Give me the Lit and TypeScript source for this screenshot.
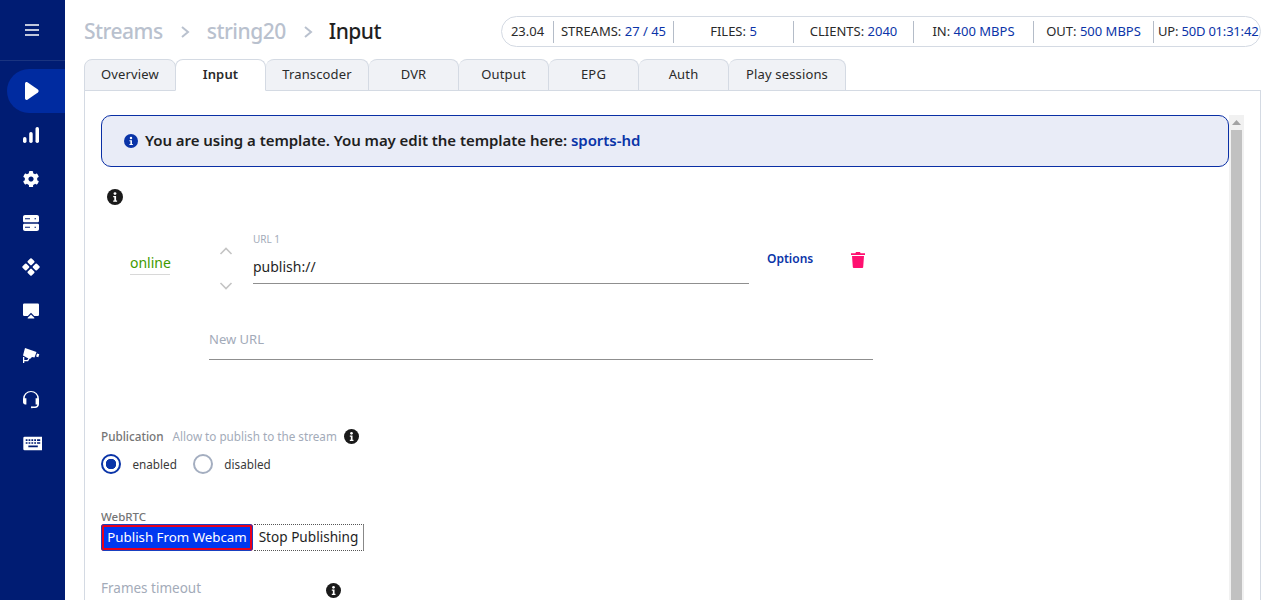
import { LitElement, html, css, svg } from "lit";
import { customElement } from "lit/decorators.js";

const info = (c = "#1a1a1a", s = 16) => html`<svg class="info" width=${s} height=${s} viewBox="0 0 16 16"><circle cx="8" cy="8" r="8" fill=${c}/><circle cx="8" cy="4.6" r="1.4" fill="#fff"/><path d="M6.2 7h2.9v4.4h1v1.3H6.2v-1.3h1.1V8.3H6.2z" fill="#fff"/></svg>`;

const cog = "M487.4 315.7l-42.6-24.6c4.3-23.2 4.3-47 0-70.2l42.6-24.6c4.9-2.8 7.1-8.6 5.5-14-11.1-35.6-30-67.8-54.7-94.6-3.8-4.1-10-5.1-14.8-2.3L380.8 110c-17.9-15.4-38.5-27.3-60.8-35.1V25.800c0-5.600-3.900-10.500-9.400-11.700-36.700-8.200-74.300-7.800-109.200 0-5.500 1.200-9.400 6.100-9.400 11.700V75c-22.200 7.900-42.800 19.800-60.800 35.100L88.700 85.500c-4.900-2.800-11-1.900-14.800 2.300-24.700 26.700-43.600 58.900-54.700 94.600-1.700 5.400.6 11.200 5.500 14L67.300 221c-4.300 23.200-4.300 47 0 70.200l-42.600 24.600c-4.900 2.800-7.100 8.600-5.500 14 11.100 35.600 30 67.800 54.700 94.600 3.800 4.100 10 5.100 14.800 2.300l42.600-24.600c17.900 15.400 38.500 27.300 60.800 35.100v49.200c0 5.600 3.900 10.500 9.400 11.700 36.700 8.200 74.300 7.800 109.200 0 5.500-1.200 9.400-6.100 9.400-11.700v-49.200c22.200-7.900 42.800-19.800 60.800-35.100l42.600 24.600c4.900 2.800 11 1.900 14.800-2.300 24.700-26.700 43.600-58.900 54.700-94.600 1.500-5.500-.7-11.300-5.600-14.100zM256 336c-44.100 0-80-35.900-80-80s35.900-80 80-80 80 35.900 80 80-35.900 80-80 80z";

const icons = [
  svg`<path d="M4 2.700c0-1.300 1.300-2 2.400-1.400l10.500 7.300c1 .7 1 2.100 0 2.800L6.400 18.700C5.300 19.300 4 18.500 4 17.300z"/>`,
  svg`<rect x="2" y="12" width="3.500" height="6" rx="1.700"/><rect x="8.200" y="7" width="3.500" height="11" rx="1.700"/><rect x="14.500" y="2" width="3.500" height="16" rx="1.700"/>`,
  svg`<path transform="translate(1.700 1.700) scale(.0325)" d=${cog}/>`,
  svg`<path fill-rule="evenodd" d="M4 2h12c1.100 0 2 .9 2 2v4c0 .8-.7 1.300-1.500 1.300h-13C2.700 9.300 2 8.800 2 8V4c0-1.100.9-2 2-2zm0 3.200v1h5v-1zm9.500 0v1h1.500v-1zM3.500 10.700h13c.8 0 1.500.5 1.500 1.300v4c0 1.100-.9 2-2 2H4c-1.100 0-2-.9-2-2v-4c0-.8.7-1.300 1.500-1.300zM4 13.800v1h5v-1zm9.500 0v1H15v-1z"/>`,
  svg`<rect x="7.200" y="2" width="5.600" height="5.600" rx="1" transform="rotate(45 10 4.800)"/><rect x="7.200" y="12.400" width="5.600" height="5.600" rx="1" transform="rotate(45 10 15.200)"/><rect x="2" y="7.200" width="5.600" height="5.600" rx="1" transform="rotate(45 4.800 10)"/><rect x="12.400" y="7.200" width="5.600" height="5.600" rx="1" transform="rotate(45 15.200 10)"/>`,
  svg`<path d="M3.200 2.500h13.600A1.300 1.300 0 0118 3.800v10a1.300 1.300 0 01-1.300 1.300h-3.500L10 11.800 6.800 15.100H3.300A1.300 1.300 0 012 13.800v-10a1.300 1.300 0 011.200-1.300z"/><path d="M10 13.500l3.300 3.300v.7H6.700v-.7z"/>`,
  svg`<path d="M4 3l11.500 4-2 5.500-2.500-.5-2 2-3-1.200-4-2.300z"/><path d="M16 8.500l2.300.8-1 3-2.200-.8zM2 12h1.300v3h3l1.200-2 1.200.6-1.600 2.700H3.300v1.700H2z"/>`,
  svg`<path d="M10 2a8 8 0 00-8 8v3.300c0 1.200 1 2.200 2.200 2.200h1.200V9.300H3.700a6.300 6.300 0 0112.600 0h-1.700v6.200h1.700c-.1 1.100-1.100 2-2.200 2h-2.500a1 1 0 100 1.500h2.500c2 0 3.900-1.600 3.900-3.700V10a8 8 0 00-8-8z"/>`,
  svg`<path fill-rule="evenodd" d="M3.500 3.500h16a1.300 1.300 0 011.300 1.300v10.400a1.300 1.300 0 01-1.300 1.300h-16a1.300 1.300 0 01-1.300-1.300V4.800a1.300 1.300 0 011.300-1.300zm1 2.500v1.500h1.700V6zm2.700 0v1.500h1.700V6zm2.700 0v1.500h1.700V6zm2.700 0v1.500h1.700V6zm2.700 0v1.500h3V6zM4.500 8.800v1.500h1.700V8.800zm2.700 0v1.500h1.700V8.800zm2.700 0v1.500h1.700V8.800zm2.700 0v1.500h1.700V8.800zm2.700 0v1.500h3V8.800zM7 12v1.500h9V12z"/>`,
];

@customElement("app-root")
export class AppRoot extends LitElement {
  static styles = css`
    :host { display: flex; height: 600px; width: 1280px; overflow: hidden; background: #fff; color: #1f1f1f; font-family: "Noto Sans", "Open Sans", sans-serif; }
    * { box-sizing: border-box; }
    .side { width: 65px; flex: none; background: #001c73; display: flex; flex-direction: column; }
    .burger { height: 61px; flex: none; border-bottom: 1px solid #1a3480; display: flex; align-items: center; justify-content: center; padding-right: 2px; }
    .burger svg { display: block; }
    .nav { display: flex; flex-direction: column; padding-top: 8px; }
    .nav-item { height: 44px; display: flex; align-items: center; padding-left: 14px; margin-left: 7px; border-radius: 22px 0 0 22px; }
    .nav-item svg { width: 20px; height: 20px; fill: #fff; display: block; flex: none; }
    .nav-item:last-child svg { width: 21px; height: 21px; }
    .nav-item.on { background: #002ba0; }
    .main { flex: 1; min-width: 0; padding: 16px 19px 0; display: flex; flex-direction: column; overflow: hidden; }
    .top { display: flex; justify-content: space-between; align-items: center; height: 31px; flex: none; }
    .crumbs { display: flex; align-items: center; font-size: 21px; font-weight: 500; color: #b9c1ce; letter-spacing: -0.5px; padding-bottom: 2px; }
    .crumbs .sep { margin: 2px 17px 0; width: 10px; height: 14px; }
    .crumbs .cur { color: #1f1f1f; margin-left: -1px; }
    .status { width: 760px; height: 31px; border: 1px solid #d4dae3; border-radius: 16px; display: flex; align-items: center; font-size: 13px; color: #2a2a2a; }
    .cell { width: 120px; height: 22px; border-right: 1px solid #b4bcc8; display: flex; align-items: center; justify-content: center; white-space: pre; padding-bottom: 2px; }
    .cell:first-child { width: 52px; }
    .cell:last-child { flex: 1; border: 0; width: auto; justify-content: flex-start; padding-left: 4px; letter-spacing: -0.2px; }
    .cell b { font-weight: 400; color: #0a34a8; }
    .tabs { display: flex; margin-top: 12px; height: 32px; flex: none; position: relative; z-index: 1; }
    .tab { height: 32px; border: 1px solid #d4dae3; border-left-width: 0; border-radius: 8px 8px 0 0; background: #f0f2f6; display: flex; align-items: center; justify-content: center; font-size: 13px; color: #2a2a2a; letter-spacing: 0.15px; padding-bottom: 2px; }
    .tab:first-child { border-left-width: 1px; }
    .tab.on { background: #fff; border-bottom-color: #fff; font-weight: 600; border-left-width: 1px; margin-left: -1px; }
    .panel { flex: none; height: 600px; border: 1px solid #d4dae3; margin-top: -1px; padding: 24px 0 0 16px; overflow: hidden; }
    .scroll { width: 1143px; height: 600px; display: flex; overflow: hidden; }
    .bar { width: 15px; flex: none; background: #f1f1f1; display: flex; flex-direction: column; align-items: center; }
    .bar svg { display: block; flex: none; margin: 5px 0 5px; }
    .thumb { flex: 1; width: 11px; background: #c1c1c1; }
    .body { width: 1128px; flex: none; display: flex; flex-direction: column; align-items: flex-start; }
    .banner { width: 100%; height: 52px; flex: none; border: 1px solid #0a2fa5; border-radius: 10px; background: #e9ecf7; display: flex; align-items: center; gap: 7px; padding-left: 22px; font-size: 15px; font-weight: 600; letter-spacing: -0.05px; }
    .banner > div { padding-bottom: 2px; }
    .banner a { color: #0a34a8; }
    .info { display: block; flex: none; }
    .tip { margin: 22px 0 0 6px; }
    .url-row { display: flex; margin-top: 23px; height: 70px; }
    .state { margin: 24px 0 0 29px; width: 40px; height: 23px; border-bottom: 1px solid #d8d8d8; color: #3f9a00; font-size: 14px; line-height: 22px; text-align: center; white-space: nowrap; }
    .arrows { width: 14px; margin: 19px 0 0 49px; display: flex; flex-direction: column; gap: 27px; }
    .arrows svg { display: block; }
    .url { width: 496px; margin-left: 20px; border-bottom: 1px solid #8f8f8f; height: 56px; padding-top: 4px; }
    .url small { display: block; font-size: 10px; line-height: 14px; color: #a3abb9; }
    .url div { font-size: 14px; line-height: 20px; margin-top: 11px; }
    .opt { margin: 22px 0 0 18px; color: #0a34a8; font-size: 12px; font-weight: 600; line-height: 18px; }
    .trash { margin: 24px 0 0 38px; display: block; }
    .new { margin: 17px 0 0 108px; width: 664px; height: 45px; border-bottom: 1px solid #8f8f8f; color: #a3abb9; font-size: 13px; line-height: 20px; padding-top: 14px; }
    .pub { display: flex; align-items: center; margin-top: 68px; font-size: 11.700px; color: #a3abb9; height: 16px; }
    .pub strong { color: #757575; font-weight: 500; margin-right: 9px; }
    .pub .info { margin-left: 7px; }
    .radios { display: flex; align-items: center; margin: 10px 0 0 0; font-size: 11.700px; color: #3a3a3a; }
    .radio { width: 20px; height: 20px; border-radius: 50%; border: 2px solid #a4aec0; flex: none; }
    .radio.on { border-color: #0a34a8; background: radial-gradient(circle, #0a34a8 0 5px, #fff 5.500px); }
    .radios span { margin: 0 16px 0 11.500px; }
    .rtc { margin-top: 35px; font-size: 11.500px; font-weight: 500; color: #757575; line-height: 16px; }
    .btns { display: flex; margin-top: -1px; }
    .pri { width: 152px; height: 27px; background: #0038f0; color: #fff; border: 3px solid #e8001c; outline: 1px solid #1a40c0; outline-offset: -1px; border-radius: 3px; font-size: 13.300px; display: flex; align-items: center; justify-content: center; white-space: nowrap; padding-bottom: 2px; }
    .sec { width: 110px; height: 27px; margin-left: 1px; border: 1px dotted #555; border-left: 0; border-right: 1px solid #888; font-size: 13.600px; display: flex; align-items: center; justify-content: center; white-space: nowrap; padding-bottom: 2px; }
    .frames { display: flex; margin-top: 27px; width: 240px; justify-content: space-between; color: #a3abb9; font-size: 13.500px; line-height: 20px; }
    .frames .info { margin-top: 5px; }
  `;

  render() {
    const tabs: [string, number][] = [["Overview", 92], ["Input", 91], ["Transcoder", 103], ["DVR", 90], ["Output", 90], ["EPG", 90], ["Auth", 90], ["Play sessions", 117]];
    const sep = html`<svg class="sep" viewBox="0 0 10 14"><path d="M2 2l6 5-6 5" fill="none" stroke="#b9c1ce" stroke-width="2"/></svg>`;
    return html`
      <aside class="side">
        <div class="burger"><svg width="14" height="12" viewBox="0 0 14 12"><path d="M0 1h14M0 6h14M0 11h14" stroke="#fff" stroke-width="1.500"/></svg></div>
        <nav class="nav">
          ${icons.map((p, i) => html`<div class="nav-item ${i === 0 ? "on" : ""}"><svg viewBox="0 0 20 20">${p}</svg></div>`)}
        </nav>
      </aside>
      <main class="main">
        <div class="top">
          <div class="crumbs"><span>Streams</span>${sep}<span>string20</span>${sep}<span class="cur">Input</span></div>
          <div class="status">
            <div class="cell">23.04</div>
            <div class="cell">STREAMS: <b>27 / 45</b></div>
            <div class="cell">FILES: <b>5</b></div>
            <div class="cell">CLIENTS: <b>2040</b></div>
            <div class="cell">IN: <b>400 MBPS</b></div>
            <div class="cell">OUT: <b>500 MBPS</b></div>
            <div class="cell">UP: <b>50D 01:31:42</b></div>
          </div>
        </div>
        <div class="tabs">
          ${tabs.map(([t, w], i) => html`<div class="tab ${i === 1 ? "on" : ""}" style="width:${w}px">${t}</div>`)}
        </div>
        <section class="panel">
          <div class="scroll">
            <div class="body">
              <div class="banner">${info("#0a34a8", 14)}<div>You are using a template. You may edit the template here: <a>sports-hd</a></div></div>
              <div class="tip">${info("#1a1a1a", 16)}</div>
              <div class="url-row">
                <div class="state">online</div>
                <div class="arrows">
                  <svg width="14" height="8" viewBox="0 0 14 8"><path d="M1.500 7L7 1.500 12.500 7" fill="none" stroke="#c4c4c4" stroke-width="1.600"/></svg>
                  <svg width="14" height="8" viewBox="0 0 14 8"><path d="M1.500 1L7 6.500 12.500 1" fill="none" stroke="#c4c4c4" stroke-width="1.600"/></svg>
                </div>
                <div class="url"><small>URL 1</small><div>publish://</div></div>
                <div class="opt">Options</div>
                <svg class="trash" width="14" height="16" viewBox="0 0 14 16"><path d="M5 0h4l.6 1.200H14v1.800H0V1.200h4.400zM1 4h12l-.8 11c0 .6-.6 1-1.200 1H3c-.6 0-1.100-.4-1.200-1z" fill="#ff1070"/></svg>
              </div>
              <div class="new">New URL</div>
              <div class="pub"><strong>Publication</strong>Allow to publish to the stream${info("#1a1a1a", 15)}</div>
              <div class="radios"><div class="radio on"></div><span>enabled</span><div class="radio"></div><span>disabled</span></div>
              <div class="rtc">WebRTC</div>
              <div class="btns"><div class="pri">Publish From Webcam</div><div class="sec">Stop Publishing</div></div>
              <div class="frames"><span>Frames timeout</span>${info("#1a1a1a", 15)}</div>
            </div>
            <div class="bar"><svg width="9" height="5" viewBox="0 0 9 5"><path d="M4.500 0L9 5H0z" fill="#a3a3a3"/></svg><div class="thumb"></div></div>
          </div>
        </section>
      </main>
    `;
  }
}
